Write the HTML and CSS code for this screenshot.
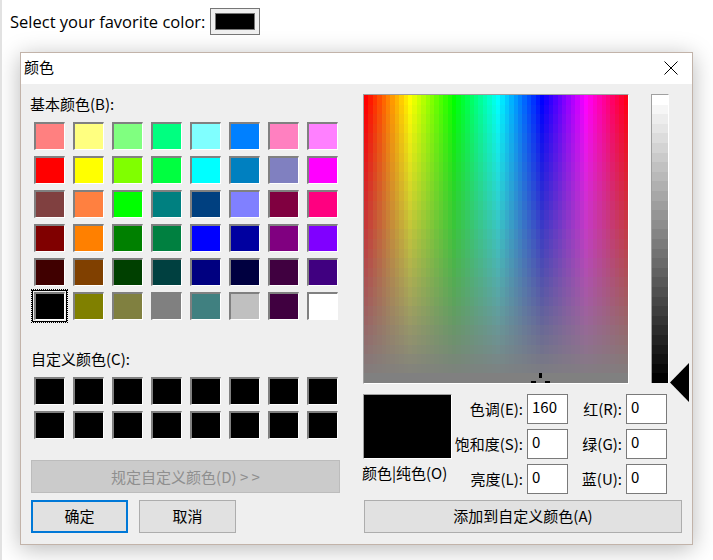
FILE: index.html
```html
<!DOCTYPE html>
<html lang="zh">
<head>
<meta charset="utf-8">
<title>Color picker</title>
<link rel="stylesheet" href="styles.css">
</head>
<body>
<header class="page-row">
  <label class="page-label">Select your favorite color:</label>
  <button class="color-input" type="button"><span class="color-input-fill"></span></button>
</header>
<section class="dialog">
  <div class="titlebar">
    <span class="title">颜色</span>
    <svg class="close" width="14" height="14" viewBox="0 0 14 14"><path d="M.5.5l13 13M13.5.5l-13 13" stroke="#000" stroke-width="1" fill="none"/></svg>
  </div>
  <div class="dialog-body">
    <div class="left">
      <div class="group-label">基本颜色(B):</div>
      <div class="swatches">
        <i class="swatch" style="background:#ff8080"></i><i class="swatch" style="background:#ffff80"></i><i class="swatch" style="background:#80ff80"></i><i class="swatch" style="background:#00ff80"></i><i class="swatch" style="background:#80ffff"></i><i class="swatch" style="background:#0080ff"></i><i class="swatch" style="background:#ff80c0"></i><i class="swatch" style="background:#ff80ff"></i>
        <i class="swatch" style="background:#ff0000"></i><i class="swatch" style="background:#ffff00"></i><i class="swatch" style="background:#80ff00"></i><i class="swatch" style="background:#00ff40"></i><i class="swatch" style="background:#00ffff"></i><i class="swatch" style="background:#0080c0"></i><i class="swatch" style="background:#8080c0"></i><i class="swatch" style="background:#ff00ff"></i>
        <i class="swatch" style="background:#804040"></i><i class="swatch" style="background:#ff8040"></i><i class="swatch" style="background:#00ff00"></i><i class="swatch" style="background:#008080"></i><i class="swatch" style="background:#004080"></i><i class="swatch" style="background:#8080ff"></i><i class="swatch" style="background:#800040"></i><i class="swatch" style="background:#ff0080"></i>
        <i class="swatch" style="background:#800000"></i><i class="swatch" style="background:#ff8000"></i><i class="swatch" style="background:#008000"></i><i class="swatch" style="background:#008040"></i><i class="swatch" style="background:#0000ff"></i><i class="swatch" style="background:#0000a0"></i><i class="swatch" style="background:#800080"></i><i class="swatch" style="background:#8000ff"></i>
        <i class="swatch" style="background:#400000"></i><i class="swatch" style="background:#804000"></i><i class="swatch" style="background:#004000"></i><i class="swatch" style="background:#004040"></i><i class="swatch" style="background:#000080"></i><i class="swatch" style="background:#000040"></i><i class="swatch" style="background:#400040"></i><i class="swatch" style="background:#400080"></i>
        <i class="swatch swatch-selected" style="background:#000000"></i><i class="swatch" style="background:#808000"></i><i class="swatch" style="background:#808040"></i><i class="swatch" style="background:#808080"></i><i class="swatch" style="background:#408080"></i><i class="swatch" style="background:#c0c0c0"></i><i class="swatch" style="background:#400040"></i><i class="swatch" style="background:#ffffff"></i>
      </div>
      <div class="group-label custom-label">自定义颜色(C):</div>
      <div class="swatches">
        <i class="swatch black"></i><i class="swatch black"></i><i class="swatch black"></i><i class="swatch black"></i><i class="swatch black"></i><i class="swatch black"></i><i class="swatch black"></i><i class="swatch black"></i>
        <i class="swatch black"></i><i class="swatch black"></i><i class="swatch black"></i><i class="swatch black"></i><i class="swatch black"></i><i class="swatch black"></i><i class="swatch black"></i><i class="swatch black"></i>
      </div>
      <button class="btn btn-define" type="button" disabled>规定自定义颜色(D) &gt; &gt;</button>
      <div class="actions">
        <button class="btn btn-ok" type="button">确定</button>
        <button class="btn btn-cancel" type="button">取消</button>
      </div>
    </div>
    <div class="right">
      <div class="pickers">
        <div class="field">
          <canvas id="hue" class="field-canvas" width="60" height="30"></canvas>
          <svg class="crosshair" width="19" height="10" viewBox="0 0 19 10"><path d="M8 0h3v5H8zM0 8h5v2H0zM14 8h5v2h-5z"/></svg>
        </div>
        <div class="slider">
          <canvas id="lum" class="slider-canvas" width="1" height="30"></canvas>
          <svg class="slider-arrow" width="19" height="39" viewBox="0 0 19 39"><path d="M0 19.5L19 0v39z"/></svg>
        </div>
      </div>
      <div class="values">
        <div class="preview"></div>
        <label class="val-label">色调(E):</label><input class="num" value="160">
        <label class="val-label">红(R):</label><input class="num" value="0">
        <label class="val-label">饱和度(S):</label><input class="num" value="0">
        <label class="val-label">绿(G):</label><input class="num" value="0">
        <div class="preview-label">颜色|纯色(O)</div>
        <label class="val-label">亮度(L):</label><input class="num" value="0">
        <label class="val-label">蓝(U):</label><input class="num" value="0">
      </div>
      <button class="btn btn-add" type="button">添加到自定义颜色(A)</button>
    </div>
  </div>
</section>
<script src="picker.js"></script>
</body>
</html>
```

FILE: styles.css
```css
* { box-sizing: border-box; }
html, body { margin: 0; height: 100%; }
body {
  background: #fff;
  color: #000;
  font-family: "Noto Sans CJK SC", "Noto Sans", sans-serif;
  font-size: 15px;
  overflow: hidden;
  border-left: 2px solid #e2e2e2;
}
.page-row {
  display: flex;
  align-items: center;
  gap: 5px;
  height: 35px;
  padding: 8px 0 0 8px;
}
.page-label {
  font-family: "Open Sans", sans-serif;
  font-size: 16.5px;
}
.color-input {
  width: 50px;
  height: 27px;
  padding: 4px;
  border: 1px solid #767676;
  background: #efefef;
  display: flex;
}
.color-input-fill {
  flex: 1;
  background: #000;
  border: 1px solid #767676;
}
.dialog {
  width: 673px;
  height: 493px;
  margin: 17px 0 0 18px;
  border: 1px solid #c2b3a9;
  background: #efefef;
  box-shadow: 0 4px 22px rgba(0, 0, 0, .28);
}
.titlebar {
  height: 31px;
  background: #fff;
  display: flex;
  align-items: center;
  justify-content: space-between;
  padding: 0 14px 0 3px;
}
.title { margin-top: -4px; }
.close { margin-top: -1px; }
.dialog-body {
  display: flex;
  padding: 10px 0 0 10px;
}
.left { width: 332px; }
.group-label {
  height: 22px;
  line-height: 20px;
  margin-left: -1px;
}
.custom-label { margin: 29px 0 0; }
.swatches {
  display: grid;
  grid-template-columns: repeat(8, 31px);
  grid-auto-rows: 28px;
  column-gap: 8px;
  row-gap: 6px;
  margin: 6px 0 0 3px;
}
.swatch {
  display: block;
  position: relative;
  border-style: solid;
  border-width: 2px 1px 1px 2px;
  border-color: #808080 #fff #fff #808080;
}
.black { background: #000; }
.swatch-selected { outline: 1px solid #000; outline-offset: 1px; }
.swatch-selected::after {
  content: "";
  position: absolute;
  inset: -5px -4px -4px -5px;
  border: 1px dotted #000;
}
.btn {
  display: block;
  height: 33px;
  padding: 0 0 2px;
  font: inherit;
  color: #000;
  background: #e1e1e1;
  border: 1px solid #adadad;
}
.btn-define {
  width: 309px;
  margin-top: 21px;
  background: #cbcbcb;
  border-color: #bcbcbc;
  color: #8f8f8f;
  padding-bottom: 1px;
}
.actions {
  display: flex;
  gap: 11px;
  margin-top: 7px;
}
.btn-ok, .btn-cancel { width: 97px; }
.btn-ok { border: 2px solid #0078d7; }
.right { width: 319px; }
.pickers {
  display: flex;
  gap: 22px;
  align-items: flex-start;
}
.field {
  position: relative;
  width: 266px;
  height: 290px;
  border-style: solid;
  border-width: 1px;
  border-color: #a0a0a0 #fff #fff #a0a0a0;
}
.field-canvas, .slider-canvas {
  display: block;
  width: 100%;
  height: 100%;
  image-rendering: pixelated;
}
.crosshair {
  position: absolute;
  left: 167px;
  bottom: 0;
}
.slider {
  position: relative;
  width: 18px;
  height: 289px;
  border-style: solid;
  border-width: 1px 1px 0 1px;
  border-color: #a0a0a0 #fff #fff #a0a0a0;
}
.slider-arrow {
  position: absolute;
  left: 18px;
  top: 268px;
}
.values {
  display: grid;
  grid-template-columns: 89px 75px 41px 58px 41px;
  grid-auto-rows: 30px;
  row-gap: 5px;
  margin-top: 10px;
}
.preview {
  grid-row: span 2;
  height: 65px;
  background: #000;
  border-style: solid;
  border-width: 1px;
  border-color: #a0a0a0 #fff #fff #a0a0a0;
}
.preview-label {
  line-height: 18px;
  margin-left: -1px;
  white-space: nowrap;
}
.val-label {
  line-height: 30px;
  text-align: right;
  padding-right: 4px;
  white-space: nowrap;
}
.num {
  width: 41px;
  height: 30px;
  border: 1px solid #7a7a7a;
  background: #fff;
  padding: 0 0 6px 4px;
  font: inherit;
  color: #000;
  outline: 0;
  border-radius: 0;
}
.btn-add {
  width: 318px;
  margin: 6px 0 0 1px;
}
```

FILE: picker.js
```js
var hue = document.getElementById('hue').getContext('2d');
for (var y = 0; y < 30; y++) {
  var sat = 100 - y * 100 / 29;
  for (var x = 0; x < 60; x++) {
    hue.fillStyle = 'hsl(' + (x * 6) + ',' + sat + '%,50%)';
    hue.fillRect(x, y, 1, 1);
  }
}
var lum = document.getElementById('lum').getContext('2d');
for (var i = 0; i < 30; i++) {
  var v = Math.round(255 - i * 255 / 29);
  lum.fillStyle = 'rgb(' + v + ',' + v + ',' + v + ')';
  lum.fillRect(0, i, 1, 1);
}
```
